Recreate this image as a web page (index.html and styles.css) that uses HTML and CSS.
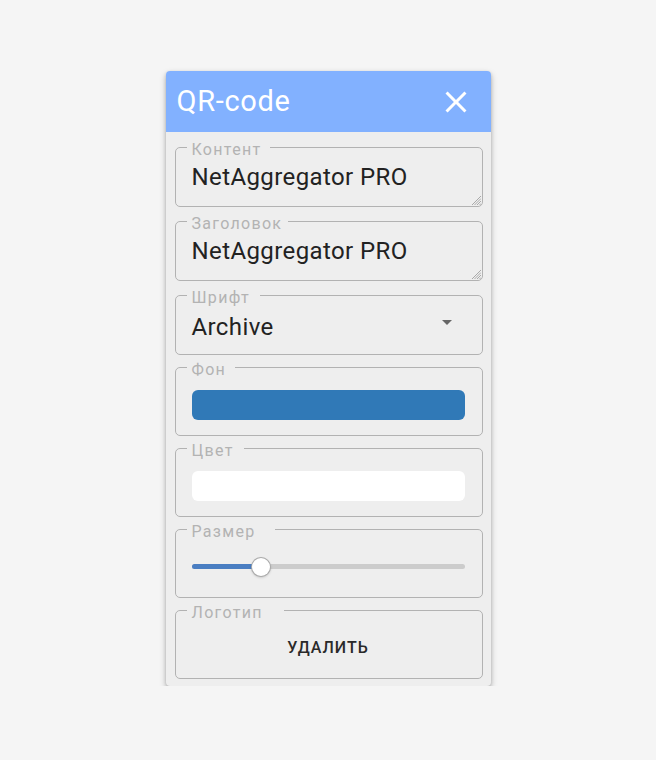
FILE: index.html
```html
<!DOCTYPE html>
<html lang="ru">
<head>
<meta charset="utf-8">
<title>QR-code</title>
<link rel="stylesheet" href="styles.css">
</head>
<body>
<div class="panel">
  <header class="panel-head">
    <h1 class="title">QR-code</h1>
    <button class="close" aria-label="Закрыть">
      <svg viewBox="0 0 24 24" width="36" height="36"><path d="M19 6.41 17.59 5 12 10.59 6.41 5 5 6.41 10.59 12 5 17.59 6.41 19 12 13.41 17.59 19 19 17.59 13.41 12z" fill="#fff"/></svg>
    </button>
  </header>
  <div class="panel-body">
    <fieldset class="field field--text">
      <legend class="label label--content">Контент</legend>
      <div class="value">NetAggregator PRO</div>
      <svg class="resize" viewBox="0 0 10 10" width="10" height="10"><path d="M10 1 1 10M10 3.5 3.5 10M10 6 6 10M10 8.5 8.5 10" stroke="#a0a0a0" stroke-width="0.9" fill="none"/></svg>
    </fieldset>
    <fieldset class="field field--text">
      <legend class="label label--title">Заголовок</legend>
      <div class="value">NetAggregator PRO</div>
      <svg class="resize" viewBox="0 0 10 10" width="10" height="10"><path d="M10 1 1 10M10 3.5 3.5 10M10 6 6 10M10 8.5 8.5 10" stroke="#a0a0a0" stroke-width="0.9" fill="none"/></svg>
    </fieldset>
    <fieldset class="field">
      <legend class="label label--font">Шрифт</legend>
      <div class="select">
        <span class="select-text">Archive</span>
        <svg class="arrow" viewBox="0 0 24 24" width="24" height="24"><path d="M7 10l5 5 5-5z" fill="#666"/></svg>
      </div>
    </fieldset>
    <fieldset class="field field--wide">
      <legend class="label label--bg">Фон</legend>
      <div class="swatch swatch--blue"></div>
    </fieldset>
    <fieldset class="field field--wide">
      <legend class="label label--color">Цвет</legend>
      <div class="swatch swatch--white"></div>
    </fieldset>
    <fieldset class="field field--wide">
      <legend class="label label--size">Размер</legend>
      <div class="slider" style="--value:25%">
        <div class="track"><div class="track-fill"></div></div>
        <div class="thumb"></div>
      </div>
    </fieldset>
    <fieldset class="field field--wide">
      <legend class="label label--logo">Логотип</legend>
      <button class="btn">Удалить</button>
    </fieldset>
  </div>
</div>
</body>
</html>
```
FILE: styles.css
```css
html, body {
  margin: 0;
  padding: 0;
}
body {
  background: #f5f5f5;
  font-family: Roboto, "Noto Sans", sans-serif;
  padding-top: 71px;
}
.panel {
  width: 325px;
  margin: 0 auto;
  background: #eeeeee;
  border-radius: 4px;
  box-shadow: 0 3px 6px rgba(0,0,0,0.28), 0 1px 3px rgba(0,0,0,0.12);
  overflow: hidden;
}
.panel-head {
  height: 61px;
  background: #82b1ff;
  display: flex;
  align-items: center;
  justify-content: space-between;
  padding: 0 17px 0 11px;
}
.title {
  margin: 0;
  font-weight: 400;
  font-size: 29px;
  letter-spacing: 0.7px;
  color: #fff;
  line-height: 1;
}
.close {
  border: 0;
  background: none;
  padding: 0;
  width: 36px;
  height: 36px;
  display: block;
}
.close svg { display: block; }
.panel-body {
  display: flex;
  flex-direction: column;
  gap: 1px;
  padding: 4px 8px 7px 9px;
}
.field {
  position: relative;
  margin: 0;
  padding: 0 17px 0 16px;
  border: 1px solid #b2b2b2;
  border-radius: 5px;
  min-width: 0;
}
.field--text {
  margin-bottom: 2px;
}
.label {
  box-sizing: border-box;
  margin-left: -5px;
  padding: 6px 5px 0;
  font-size: 16px;
  letter-spacing: 1.3px;
  line-height: 16px;
  color: #b3b3b3;
  white-space: nowrap;
}
.label--content { width: 83px; }
.label--title { width: 101px; }
.label--font { width: 73px; }
.label--bg { width: 48px; }
.label--color { width: 57px; }
.label--size { width: 88px; }
.label--logo { width: 97px; }
.value {
  box-sizing: border-box;
  height: 48px;
  padding-top: 6px;
  font-size: 24px;
  letter-spacing: 0.4px;
  line-height: 26px;
  color: #222;
}
.resize {
  position: absolute;
  right: 1px;
  bottom: 1px;
  display: block;
}
.select {
  box-sizing: border-box;
  height: 48px;
  padding-top: 8px;
  display: flex;
  justify-content: space-between;
  align-items: flex-start;
}
.select-text {
  font-size: 24px;
  letter-spacing: 0.4px;
  line-height: 26px;
  color: #222;
}
.arrow {
  display: block;
  margin: -4px 6px 0 0;
}
.swatch {
  height: 30px;
  border-radius: 6px;
  margin: 12px 0 15px;
}
.swatch--blue { background: #3079b7; }
.swatch--white { background: #ffffff; }
.slider {
  position: relative;
  height: 18px;
  margin: 18px 0 21px;
}
.track {
  position: absolute;
  left: 0;
  right: 0;
  top: 6px;
  height: 5px;
  border-radius: 3px;
  background: #cccccc;
  overflow: hidden;
}
.track-fill {
  width: var(--value);
  height: 100%;
  background: #4a7ec2;
}
.thumb {
  position: absolute;
  top: 0;
  left: var(--value);
  width: 18px;
  height: 18px;
  margin-left: -8px;
  border-radius: 50%;
  background: #fff;
  box-shadow: 0 0 0 1px #aaa, 0 1px 3px rgba(0,0,0,0.3);
}
.btn {
  display: block;
  height: 36px;
  margin: 8px auto 13px;
  padding: 0 16px;
  border: 0;
  background: none;
  font-family: Roboto, "Noto Sans", sans-serif;
  font-weight: 500;
  font-size: 16px;
  letter-spacing: 1px;
  text-transform: uppercase;
  color: #2a2a2a;
}
```
